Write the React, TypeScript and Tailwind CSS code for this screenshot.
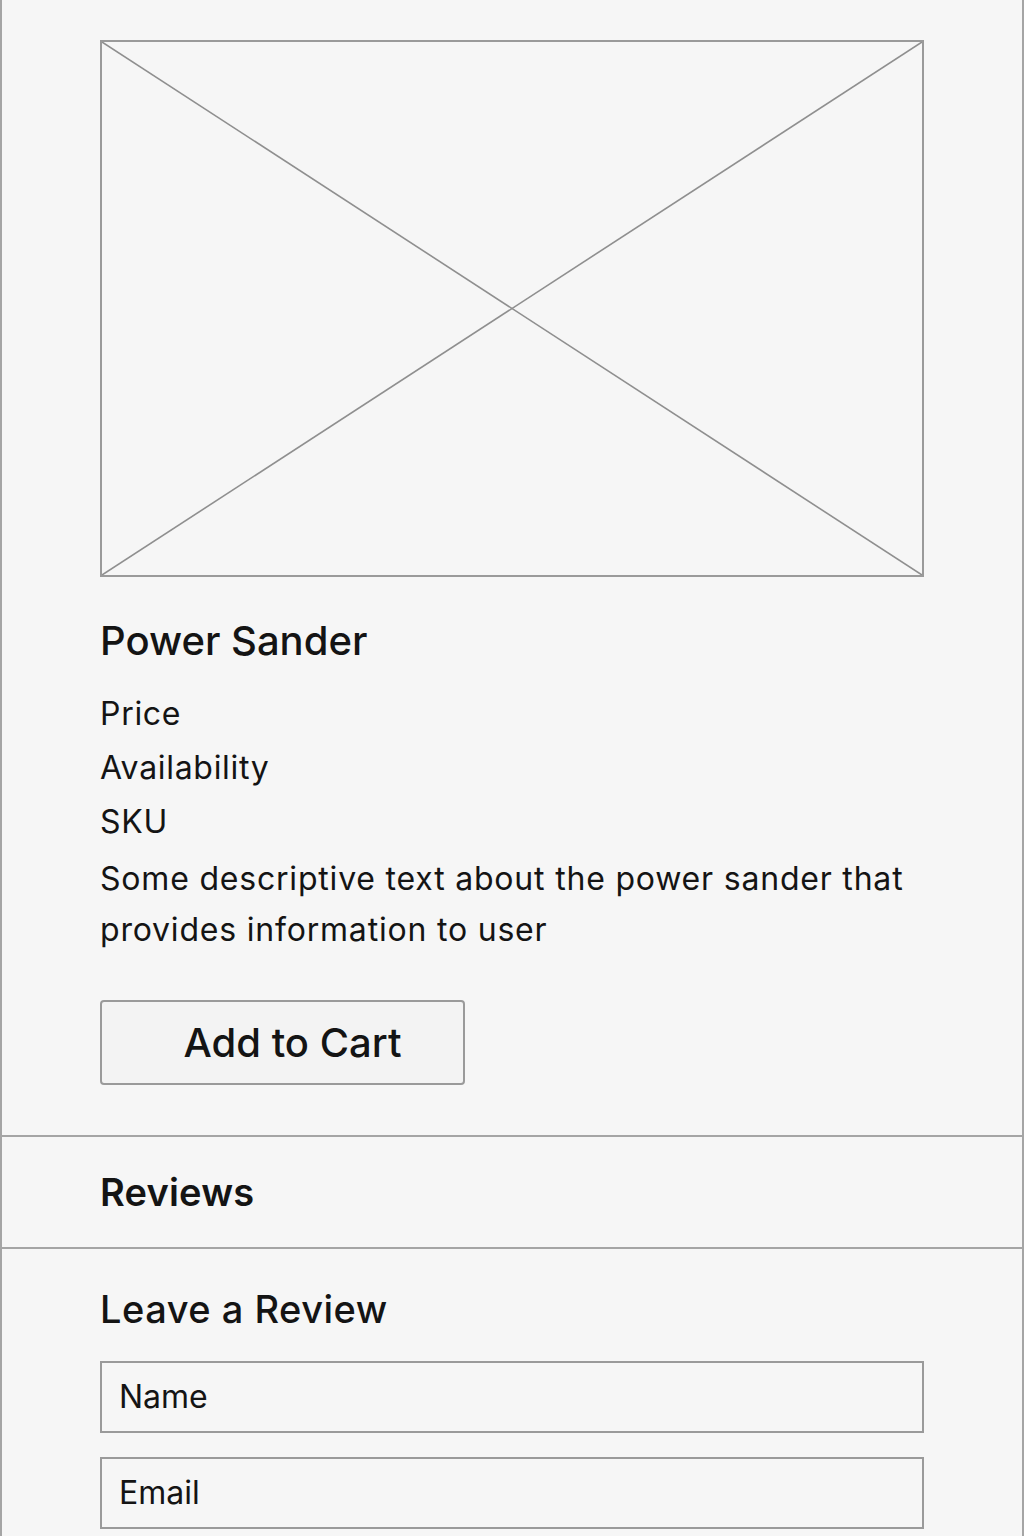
import React from 'react';

const Placeholder = () => (
  <div className="relative h-[537px] w-full border-2 border-[#9a9a9a]">
    <svg className="absolute inset-0 h-full w-full" preserveAspectRatio="none" viewBox="0 0 100 100">
      <line x1="0" y1="0" x2="100" y2="100" stroke="#8f8f8f" strokeWidth="1.6" vectorEffect="non-scaling-stroke" />
      <line x1="100" y1="0" x2="0" y2="100" stroke="#8f8f8f" strokeWidth="1.6" vectorEffect="non-scaling-stroke" />
    </svg>
  </div>
);

export default function App() {
  return (
    <div className="min-h-[1536px] w-[1024px] bg-[#f6f6f6] font-['Inter',sans-serif] text-[#141414] border-x-2 border-[#a5a5a5]">
      {/* product */}
      <section className="px-[98px] pt-[40px] pb-[50px]">
        <Placeholder />
        <h1 className="mt-[40px] text-[40px] font-medium leading-[48px]">Power Sander</h1>
        <div className="mt-[22px] flex flex-col text-[32px] leading-[54px] tracking-[0.7px]">
          <span>Price</span>
          <span>Availability</span>
          <span>SKU</span>
        </div>
        <p className="mt-[4px] text-[32px] leading-[51px] tracking-[0.8px]">
          Some descriptive text about the power sander that provides information to user
        </p>
        <button className="mt-[45px] flex h-[85px] w-[365px] items-center justify-center rounded-[4px] border-2 border-[#9a9a9a] bg-[#f3f3f3] pl-[20px] text-[40px] font-medium">
          Add to Cart
        </button>
      </section>

      {/* reviews */}
      <section className="border-y-2 border-[#a5a5a5] px-[98px] py-[31px]">
        <h2 className="text-[38px] font-semibold leading-[48px] tracking-[0.2px]">Reviews</h2>
      </section>

      {/* leave a review */}
      <section className="px-[98px] pt-[36px]">
        <h2 className="text-[38px] font-medium leading-[48px] tracking-[0.5px]">Leave a Review</h2>
        <div className="mt-[28px] flex flex-col gap-[24px]">
          <div className="flex h-[72px] items-center border-2 border-[#9a9a9a] px-[17px] text-[32px]">Name</div>
          <div className="flex h-[72px] items-center border-2 border-[#9a9a9a] px-[17px] text-[32px]">Email</div>
        </div>
      </section>
    </div>
  );
}
